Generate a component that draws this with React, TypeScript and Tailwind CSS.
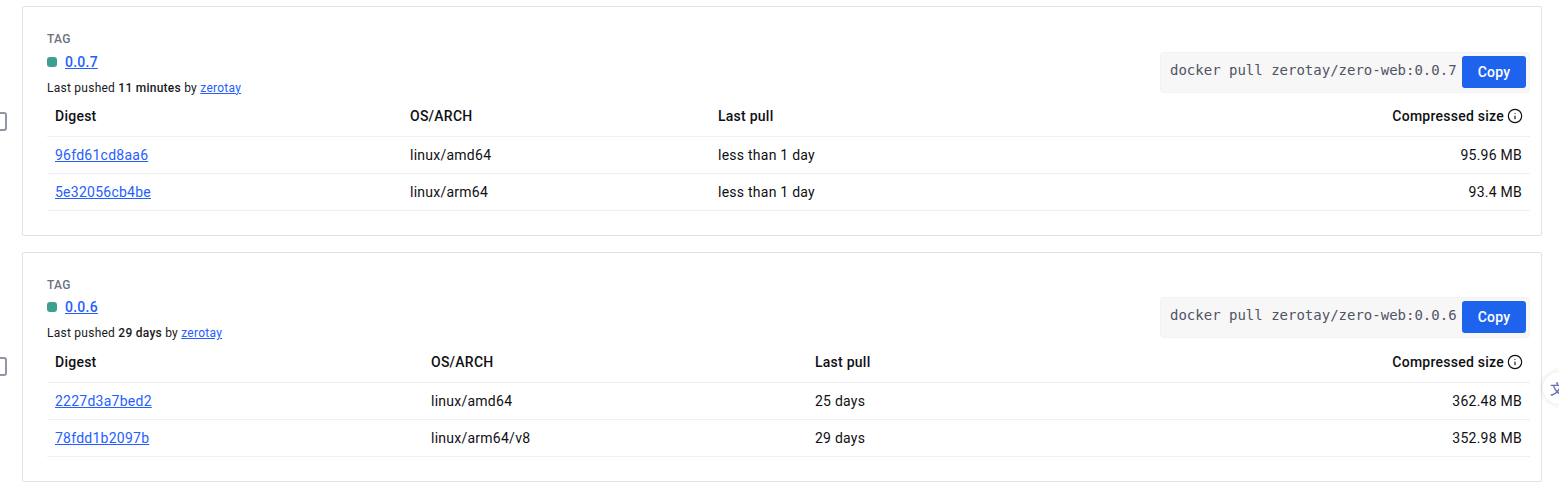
import { Info } from 'lucide-react'

type Row = { digest: string; arch: string; pull: string; size: string }

type Tag = {
  version: string
  pushed: string
  archWidth: string
  digestWidth: string
  rows: Row[]
}

const TAGS: Tag[] = [
  {
    version: '0.0.7',
    pushed: '11 minutes',
    digestWidth: 'w-[355px]',
    archWidth: 'w-[308px]',
    rows: [
      { digest: '96fd61cd8aa6', arch: 'linux/amd64', pull: 'less than 1 day', size: '95.96 MB' },
      { digest: '5e32056cb4be', arch: 'linux/arm64', pull: 'less than 1 day', size: '93.4 MB' },
    ],
  },
  {
    version: '0.0.6',
    pushed: '29 days',
    digestWidth: 'w-[376px]',
    archWidth: 'w-[384px]',
    rows: [
      { digest: '2227d3a7bed2', arch: 'linux/amd64', pull: '25 days', size: '362.48 MB' },
      { digest: '78fdd1b2097b', arch: 'linux/arm64/v8', pull: '29 days', size: '352.98 MB' },
    ],
  },
]

function TagCard({ tag }: { tag: Tag }) {
  return (
    <div className="flex items-center">
      {/* row checkbox, mostly scrolled off the left edge */}
      <div className="w-4 h-[19px] ml-[-9px] mr-[15px] shrink-0 rounded-[3px] border-2 border-[#8f96a8] bg-white" />
      <section className="w-[1520px] h-[229.6px] border border-[#e1e2e6] rounded-[2px] bg-white pl-6 pr-[11px] pt-6 tracking-[0.25px]">
        <div className="flex items-start justify-between h-[65.2px]">
          <div>
            <p className="text-xs leading-4 font-medium text-[#6c7180]">TAG</p>
            <div className="flex items-center gap-2 mt-[2.3px] h-6">
              <span className="w-2.5 h-2.5 rounded-[3px] bg-[#3ba08d]" />
              <a href="#" className="text-sm font-medium text-[#2560ff] underline">{tag.version}</a>
            </div>
            <p className="text-xs leading-4 mt-[6px] text-[#17191e]">
              Last pushed <span className="font-medium">{tag.pushed}</span> by{' '}
              <a href="#" className="text-[#2560ff] underline">zerotay</a>
            </p>
          </div>
          <div className="flex items-start h-[41px] w-[370px] rounded bg-[#f7f7f8] border border-[#f2f2f3] pl-[9px] pr-[3px] pt-[3px] justify-between mt-[20.3px]">
            <code className="text-sm mt-1 tracking-normal text-[#4f5562] font-['DejaVu_Sans_Mono',monospace] whitespace-pre">docker pull zerotay/zero-web:{tag.version}</code>
            <button className="w-16 h-8 rounded-[3px] bg-[#1d63ed] text-white text-sm font-medium">Copy</button>
          </div>
        </div>
        <table className="w-full text-sm text-[#0f1013] border-collapse">
          <thead>
            <tr className="h-[40px] border-b border-[#eff0f1]">
              <th className={'text-left font-medium px-2 ' + tag.digestWidth}>Digest</th>
              <th className={'text-left font-medium px-2 ' + tag.archWidth}>OS/ARCH</th>
              <th className="text-left font-medium px-2">Last pull</th>
              <th className="text-right font-medium px-2">
                <span className="inline-flex items-center gap-[3px] -mr-px">
                  Compressed size
                  <Info size={16} strokeWidth={1.75} />
                </span>
              </th>
            </tr>
          </thead>
          <tbody>
            {tag.rows.map((row) => (
              <tr key={row.digest} className="h-[37px] border-b border-[#eff0f1]">
                <td className="px-2">
                  <a href="#" className="text-[#2560ff] underline">{row.digest}</a>
                </td>
                <td className="px-2">{row.arch}</td>
                <td className="px-2">{row.pull}</td>
                <td className="px-2 text-right">{row.size}</td>
              </tr>
            ))}
          </tbody>
        </table>
      </section>
    </div>
  )
}

export default function App() {
  return (
    <div className="relative h-[489px] w-[1559px] overflow-hidden bg-white pt-[6.4px] font-['Roboto',sans-serif]">
      <div className="flex flex-col gap-4">
        {TAGS.map((tag) => (
          <TagCard key={tag.version} tag={tag} />
        ))}
      </div>
      {/* floating translate widget */}
      <div className="absolute left-[1543px] top-[372px] w-8 h-8 rounded-full bg-white shadow-[0_0_6px_rgba(0,0,0,0.12)] flex items-center pl-[7px] text-[14px] font-medium text-[#6a70b8] font-['Noto_Sans_CJK_SC',sans-serif]">
        文
      </div>
    </div>
  )
}
